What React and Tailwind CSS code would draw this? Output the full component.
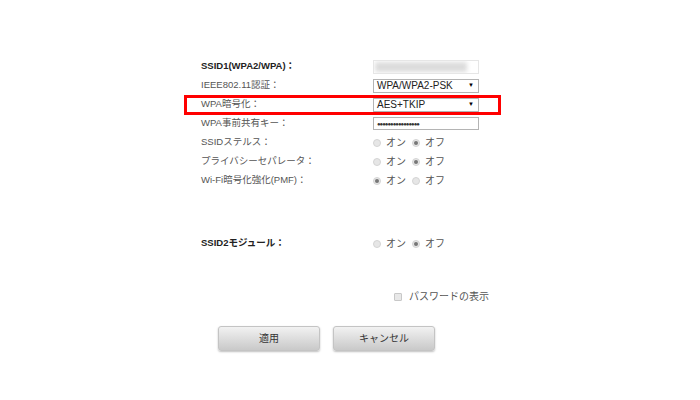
import React from "react";

const font = { fontFamily: '"Liberation Sans", "Noto Sans CJK JP", sans-serif' };

function Radio({ checked }) {
  return (
    <span className="inline-flex h-[8px] w-[8px] items-center justify-center rounded-full border border-[#d4d4d4] bg-[#e6e6e6]">
      {checked && <span className="h-[4px] w-[4px] rounded-full bg-[#777]" />}
    </span>
  );
}

function OnOff({ on }) {
  return (
    <div className="flex items-center text-[10px] text-[#555]">
      <Radio checked={on} />
      <span className="ml-[5px] mr-[6px]">オン</span>
      <Radio checked={!on} />
      <span className="ml-[5px]">オフ</span>
    </div>
  );
}

function Row({ label, bold, children, relative }) {
  return (
    <div className={"flex h-[19px] items-center " + (relative ? "relative" : "")}>
      <div className={"w-[172px] text-[9.5px] " + (bold ? "font-bold text-[#222]" : "text-[#555]")}>{label}</div>
      <div className="flex items-center">{children}</div>
    </div>
  );
}

function Select({ value }) {
  return (
    <div className="flex h-[14px] w-[106px] items-center justify-between border border-[#b4b4b4] bg-white pl-[3px] pr-[4px] text-[10px] text-[#222]">
      <span>{value}</span>
      <span className="text-[6px] text-black">▼</span>
    </div>
  );
}

export default function App() {
  return (
    <div className="h-[400px] w-[700px] bg-white" style={font}>
      <div className="pl-[201px] pt-[57px]">
        <Row label="SSID1(WPA2/WPA)：" bold>
          <div className="relative h-[14px] w-[106px] overflow-hidden border border-[#e6e6e6] bg-white">
            <div className="absolute left-[1px] top-[1px] h-[10px] w-[92px] bg-[#dcdcdc] blur-[2px]" />
          </div>
        </Row>
        <Row label="IEEE802.11認証：">
          <Select value="WPA/WPA2-PSK" />
        </Row>
        <Row label="WPA暗号化：" relative>
          <Select value="AES+TKIP" />
          <div className="pointer-events-none absolute left-[-17px] top-[0px] h-[20px] w-[317px] border-[3px] border-[#ff0000]" />
        </Row>
        <Row label="WPA事前共有キー：">
          <div className="flex h-[13px] w-[106px] items-center border border-[#b4b4b4] bg-white pl-[3px] text-[6px] leading-none tracking-[-1px] text-[#333]">
            ●●●●●●●●●●●●●●●●
          </div>
        </Row>
        <Row label="SSIDステルス：">
          <OnOff on={false} />
        </Row>
        <Row label="プライバシーセパレータ：">
          <OnOff on={false} />
        </Row>
        <Row label="Wi-Fi暗号化強化(PMF)：">
          <OnOff on={true} />
        </Row>
        <div className="mt-[44px]">
          <Row label="SSID2モジュール：" bold>
            <OnOff on={false} />
          </Row>
        </div>
        <div className="mt-[34px] flex h-[19px] items-center pl-[193px] text-[10px] text-[#555]">
          <span className="h-[8px] w-[8px] rounded-[1px] border border-[#c8c8c8] bg-[#e8e8e8]" />
          <span className="ml-[7px]">パスワードの表示</span>
        </div>
        <div className="mt-[20px] flex gap-[13px] pl-[17px]">
          <button className="h-[25px] w-[102px] rounded-[3px] border border-[#c4c4c4] bg-gradient-to-b from-[#f2f2f2] to-[#c9c9c9] text-[10px] text-[#333] shadow-[0_1px_2px_rgba(0,0,0,0.25)]">
            適用
          </button>
          <button className="h-[25px] w-[102px] rounded-[3px] border border-[#c4c4c4] bg-gradient-to-b from-[#f2f2f2] to-[#c9c9c9] text-[10px] text-[#333] shadow-[0_1px_2px_rgba(0,0,0,0.25)]">
            キャンセル
          </button>
        </div>
      </div>
    </div>
  );
}
